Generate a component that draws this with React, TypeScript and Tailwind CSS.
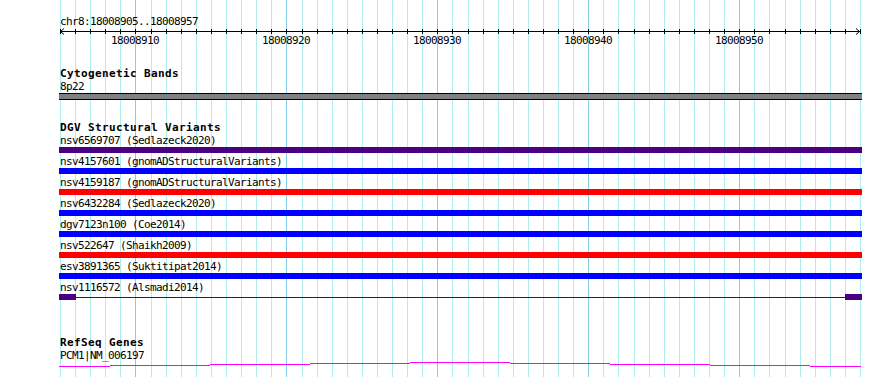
const START = 18008905;
const END = 18008957;
const BASES = END - START + 1;
const X0 = 60;
const SPAN = 800;
const LEFT = 59;

const baseX = (i: number) => Math.round(X0 + (i * SPAN) / BASES);
const gridLines = Array.from({ length: BASES + 1 }, (_, i) => ({
  x: baseX(i),
  major: (START + i) % 10 === 0,
}));

const variants = [
  { name: 'nsv6569707 (Sedlazeck2020)', color: 'bg-[#4b0082]' },
  { name: 'nsv4157601 (gnomADStructuralVariants)', color: 'bg-[#0000ff]' },
  { name: 'nsv4159187 (gnomADStructuralVariants)', color: 'bg-[#ff0000]' },
  { name: 'nsv6432284 (Sedlazeck2020)', color: 'bg-[#0000ff]' },
  { name: 'dgv7123n100 (Coe2014)', color: 'bg-[#0000ff]' },
  { name: 'nsv522647 (Shaikh2009)', color: 'bg-[#ff0000]' },
  { name: 'esv3891365 (Suktitipat2014)', color: 'bg-[#0000ff]' },
];

// stepped transcript line (x1, x2, y) in page coordinates
const geneSteps = [
  [59, 110, 366],
  [110, 210, 365],
  [210, 310, 364],
  [310, 410, 363],
  [410, 510, 362],
  [510, 610, 363],
  [610, 710, 364],
  [710, 810, 365],
  [810, 861, 366],
];

const Grid = () => (
  <svg
    className="absolute inset-0"
    width={890}
    height={377}
    shapeRendering="crispEdges"
  >
    {gridLines.map((g, i) => (
      <rect
        key={i}
        x={g.x}
        y={0}
        width={1}
        height={377}
        fill={g.major ? '#87ceeb' : '#afeeee'}
      />
    ))}
  </svg>
);

const Ruler = () => (
  <div className="relative h-[20px] w-[803px]">
    <svg className="absolute left-0 top-0" width={803} height={8}>
      <g shapeRendering="crispEdges">
        <rect x={1} y={3} width={801} height={1} fill="#000" />
        {gridLines.map((g, i) => (
          <rect key={i} x={g.x - LEFT} y={1} width={1} height={5} fill="#000" />
        ))}
      </g>
      <polyline points="5,0.5 1.5,3.5 5,6.5" fill="none" stroke="#000" />
      <polyline points="797,0.5 800.5,3.5 797,6.5" fill="none" stroke="#000" />
    </svg>
    {gridLines
      .filter((g) => g.major)
      .map((g, i) => (
        <span
          key={i}
          className="absolute top-[6px] w-[48px] text-center"
          style={{ left: g.x - LEFT - 24 }}
        >
          {START + gridLines.indexOf(g)}
        </span>
      ))}
  </div>
);

const TrackTitle = ({ children }: { children: string }) => (
  <div className="pl-px font-bold tracking-[0.38px]">{children}</div>
);

export default function App() {
  return (
    <div className="relative h-[377px] w-[890px] overflow-hidden bg-white">
      <Grid />
      <div className="relative flex flex-col pl-[59px] pt-[15px] font-['DejaVu_Sans_Mono','Liberation_Mono',monospace] text-[11px] leading-[13px] tracking-[-0.62px] text-black">
        <div className="pl-px">chr8:18008905..18008957</div>
        <Ruler />

        <div className="mt-[19px]">
          <TrackTitle>Cytogenetic Bands</TrackTitle>
          <div className="pl-px">8p22</div>
          <div className="h-[7px] w-[803px] border-y border-black bg-[#808080]" />
        </div>

        <div className="mt-[21px]">
          <TrackTitle>DGV Structural Variants</TrackTitle>
          {variants.map((v) => (
            <div key={v.name} className="mb-[2px]">
              <div className="pl-px">{v.name}</div>
              <div className={`h-[6px] w-[803px] ${v.color}`} />
            </div>
          ))}
          <div className="mb-[2px]">
            <div className="pl-px">nsv1116572 (Alsmadi2014)</div>
            <div className="flex h-[6px] w-[803px] items-center">
              <div className="h-[6px] w-[17px] bg-[#4b0082]" />
              <div className="h-px flex-1 bg-[#4b0082]" />
              <div className="h-[6px] w-[17px] bg-[#4b0082]" />
            </div>
          </div>
        </div>

        <div className="mt-[34px]">
          <TrackTitle>RefSeq Genes</TrackTitle>
          <div className="pl-px">PCM1|NM_006197</div>
          <svg width={803} height={6} shapeRendering="crispEdges">
            {geneSteps.map(([x1, x2, y], i) => (
              <rect
                key={i}
                x={x1 - LEFT}
                y={y - 362}
                width={x2 - x1}
                height={1}
                fill="#ff00ff"
              />
            ))}
          </svg>
        </div>
      </div>
    </div>
  );
}
